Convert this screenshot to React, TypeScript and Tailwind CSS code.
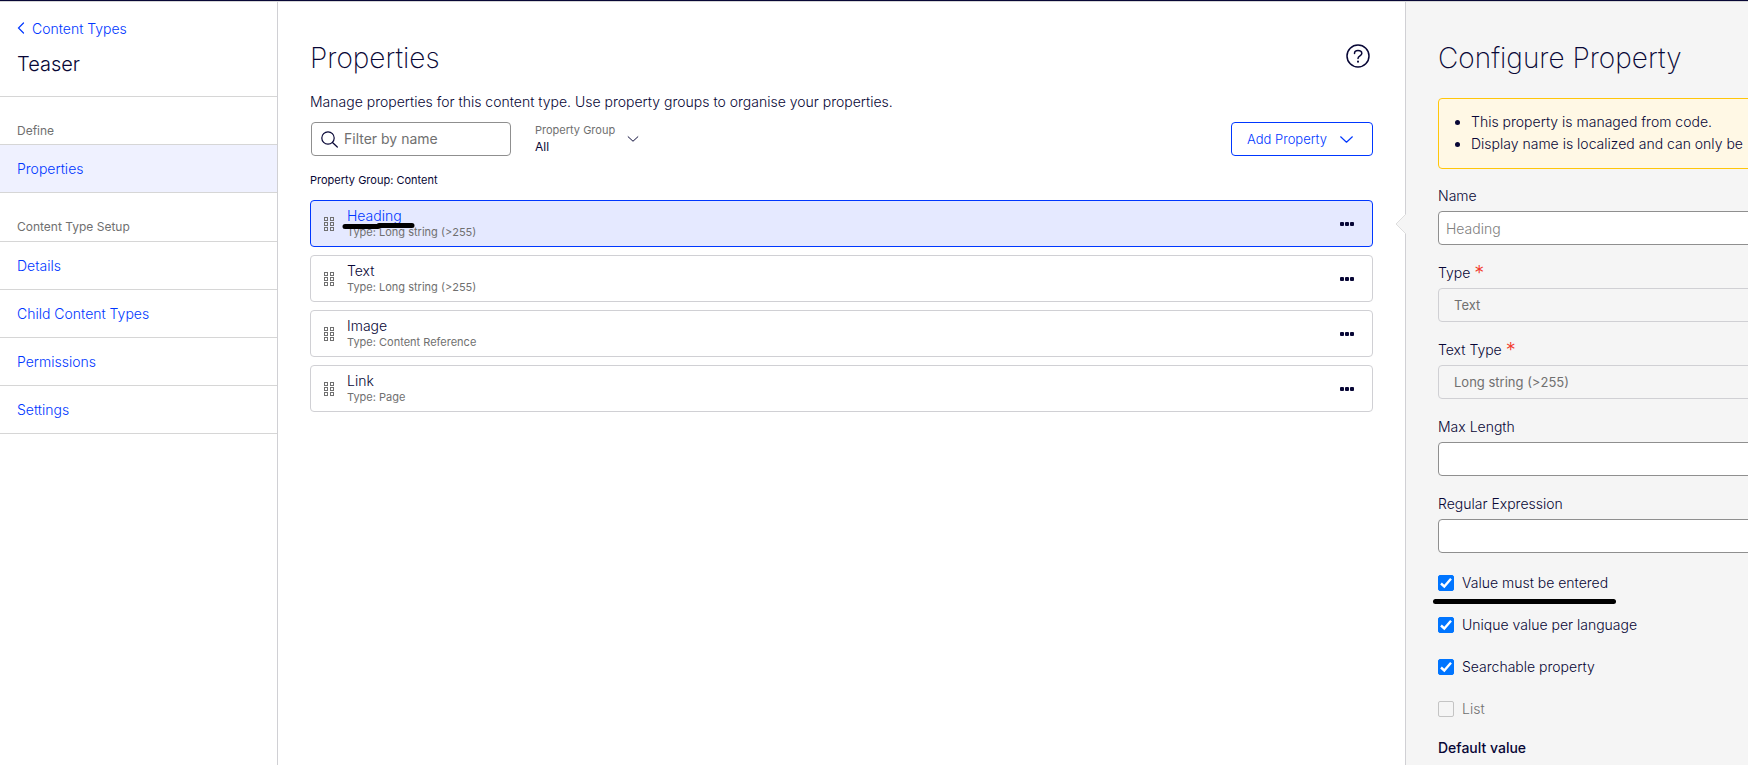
import React, { useState } from 'react';

interface Property {
  id: string;
  name: string;
  type: string;
}

const properties: Property[] = [
  { id: 'heading', name: 'Heading', type: 'Long string (>255)' },
  { id: 'text', name: 'Text', type: 'Long string (>255)' },
  { id: 'image', name: 'Image', type: 'Content Reference' },
  { id: 'link', name: 'Link', type: 'Page' }
];

const setupLinks = ['Details', 'Child Content Types', 'Permissions', 'Settings'];

const ChevronDown: React.FC<{ className: string }> = ({ className }) => (
  <svg viewBox="0 0 16 10" fill="none" stroke="currentColor" strokeWidth="1.3" strokeLinecap="round" strokeLinejoin="round" className={className}>
    <path d="M1.5 2 8 8l6.500-6" />
  </svg>
);

const GripIcon: React.FC = () => (
  <svg width="10" height="14" viewBox="0 0 10 14" fill="none" stroke="#707070" strokeWidth="1" className="mt-px">
    {[0.5, 5.5, 10.5].map(y => (
      <React.Fragment key={y}>
        <rect x="0.5" y={y} width="3" height="3" />
        <rect x="6.500" y={y} width="3" height="3" />
      </React.Fragment>
    ))}
  </svg>
);

const Sidebar: React.FC = () => (
  <nav className="w-[278px] shrink-0 border-r border-[#d0d0d4]">
    {/* Header */}
    <div className="h-[95px] border-b border-[#d6d6d6] px-[17px] pt-[17px]">
      <a href="#content-types" className="flex items-center gap-[7px] leading-5 text-[#0037ff]">
        <svg width="8" height="12" viewBox="0 0 8 12" fill="none" stroke="currentColor" strokeWidth="1.2" strokeLinecap="round" className="-mt-0.5">
          <path d="M6.500 1 1.5 6l5 5" />
        </svg>
        Content Types
      </a>
      <h1 className="mt-[11px] text-xl leading-7">Teaser</h1>
    </div>

    <h2 className="h-12 border-b border-[#d6d6d6] px-[17px] pt-[26px] text-xs leading-4 font-normal text-[#707070]">Define</h2>
    <a href="#properties" className="flex h-12 items-center border-b border-[#d6d6d6] bg-[#eff1ff] px-[17px] text-[#0037ff]">
      Properties
    </a>

    <h2 className="h-[49px] border-b border-[#d6d6d6] px-[17px] pt-[26px] text-xs leading-4 font-normal text-[#707070]">Content Type Setup</h2>
    {setupLinks.map(link => (
      <a key={link} href="#setup" className="flex h-12 items-center border-b border-[#d6d6d6] px-[17px] text-[#0037ff]">
        {link}
      </a>
    ))}
  </nav>
);

const PropertyRow: React.FC<{ property: Property; selected: boolean; onSelect: () => void }> = ({ property, selected, onSelect }) => (
  <li
    className={`relative flex h-[47px] items-center rounded border pr-[18px] pl-[13px] ${
      selected ? 'border-[#0037ff] bg-[#e5e9ff]' : 'border-[#d0d0d4] bg-white'
    }`}
  >
    <GripIcon />
    <button onClick={onSelect} className="ml-[13px] flex-1 text-left">
      <span className={`block leading-4 ${selected ? 'text-[#0037ff]' : ''}`}>{property.name}</span>
      <span className="block text-[11px] leading-4 font-normal text-[#707070]">{`Type: ${property.type}`}</span>
    </button>
    <button aria-label={`More actions for ${property.name}`}>
      <svg width="14" height="4" viewBox="0 0 14 4" fill="#080736">
        <rect width="4" height="4" rx="1" />
        <rect x="5" width="4" height="4" rx="1" />
        <rect x="10" width="4" height="4" rx="1" />
      </svg>
    </button>
    {/* Marker stroke */}
    {selected && (
      <svg width="74" height="8" viewBox="0 0 74 8" fill="none" stroke="#000" strokeWidth="5" strokeLinecap="round" className="absolute top-[20px] left-[31px]">
        <path d="M3 5.500H36M37 4.500H70" />
      </svg>
    )}
  </li>
);

const Required: React.FC = () => <span className="text-xl leading-5 text-[#f23c2e]">*</span>;

const TextField: React.FC<{ id: string; label: string; placeholder?: string }> = ({ id, label, placeholder }) => (
  <div>
    <label htmlFor={id} className="block h-[25px] leading-5">{label}</label>
    <input
      id={id}
      placeholder={placeholder}
      className="block h-[34px] w-full rounded border border-[#8f8f8f] bg-white px-[7px] placeholder:text-[#808080]"
    />
  </div>
);

const SelectField: React.FC<{ id: string; label: string; value: string }> = ({ id, label, value }) => (
  <div>
    <label htmlFor={id} className="flex h-[25px] gap-1 leading-5">
      {label}
      <Required />
    </label>
    <select
      id={id}
      disabled
      className="block h-[34px] w-full appearance-none rounded border border-[#d0d0d4] px-[15px] text-[13px] font-normal text-[#707070] opacity-100"
    >
      <option>{value}</option>
    </select>
  </div>
);

const Checkbox: React.FC<{ label: string; defaultChecked?: boolean; disabled?: boolean; marked?: boolean }> = ({
  label,
  defaultChecked,
  disabled,
  marked
}) => (
  <label className={`relative flex h-4 items-center gap-2 ${disabled ? 'text-[#707070]' : ''}`}>
    <input
      type="checkbox"
      defaultChecked={defaultChecked}
      disabled={disabled}
      className="peer size-4 appearance-none rounded-xs border border-[#c4c4c4] checked:border-[#0075ff] checked:bg-[#0075ff]"
    />
    <svg viewBox="0 0 16 16" fill="none" stroke="#fff" strokeWidth="2.400" className="pointer-events-none absolute left-0 hidden size-4 peer-checked:block">
      <path d="M3 8.500 6.300 11.500 13 3.800" />
    </svg>
    {label}
    {marked && <span className="absolute top-6 -left-[5px] h-[5px] w-[183px] rounded-full bg-black" />}
  </label>
);

const ConfigurePanel: React.FC = () => (
  <aside className="relative w-[343px] shrink-0 border-l border-[#d0d0d4] bg-[#f5f5f5]">
    {/* Pointer towards the selected row */}
    <svg width="11" height="20" viewBox="0 0 11 20" className="absolute top-[212px] -left-[11px]">
      <path d="M11 0 1 10l10 10" fill="#f5f5f5" stroke="#dedede" />
    </svg>
    <div className="h-full overflow-hidden pl-8">
      <div className="w-[420px]">
        <h2 className="pt-9 text-[28px] leading-10 font-extralight">Configure Property</h2>
        <ul className="mt-5 flex h-[71px] list-disc flex-col rounded border border-[#ffc60a] bg-[#fff8e5] pt-3 pl-8 leading-[22px]">
          <li>This property is managed from code.</li>
          <li>Display name is localized and can only be</li>
        </ul>

        <form className="mt-[17px] flex flex-col gap-[18px]">
          <TextField id="name" label="Name" placeholder="Heading" />
          <SelectField id="type" label="Type" value="Text" />
          <SelectField id="text-type" label="Text Type" value="Long string (>255)" />
          <TextField id="max-length" label="Max Length" />
          <TextField id="regex" label="Regular Expression" />

          <div className="mt-1 flex flex-col gap-[26px]">
            <Checkbox label="Value must be entered" defaultChecked marked />
            <Checkbox label="Unique value per language" defaultChecked />
            <Checkbox label="Searchable property" defaultChecked />
            <Checkbox label="List" disabled />
          </div>
          <h3 className="mt-[3px] leading-5 font-medium">Default value</h3>
        </form>
      </div>
    </div>
  </aside>
);

export default function App() {
  const [selectedId, setSelectedId] = useState<string>('heading');

  return (
    <div className="flex h-screen flex-col overflow-hidden bg-white font-['Inter',sans-serif] text-sm font-light text-[#080736]">
      <div className="h-0.5 shrink-0 border-b border-[#d6d6d6] bg-[#080736]" />
      <div className="flex min-h-0 flex-1">
        <Sidebar />

        <main className="min-w-0 flex-1 px-8">
          {/* Title */}
          <div className="flex items-start justify-between pt-9">
            <h2 className="text-[28px] leading-10 font-extralight">Properties</h2>
            <button aria-label="Help" className="mt-1.5 mr-[3px]">
              <svg width="24" height="24" viewBox="0 0 24 24" fill="none" stroke="currentColor" strokeWidth="1.5" strokeLinecap="round">
                <circle cx="12" cy="12" r="11" />
                <path d="M8.500 9.500C8.500 7.500 10 6.500 12 6.500s3.800 1 3.800 3c0 2.500-3.800 2.300-3.800 5" />
                <path d="M12 17.500v.2" strokeWidth="2" />
              </svg>
            </button>
          </div>
          <p className="mt-[14px] leading-5">Manage properties for this content type. Use property groups to organise your properties.</p>

          {/* Filters */}
          <div className="mt-[10px] flex items-center">
            <label className="ml-px flex h-[34px] w-[200px] items-center gap-[6px] rounded border border-[#8f8f8f] px-[9px]">
              <svg width="17" height="17" viewBox="0 0 17 17" fill="none" stroke="currentColor" strokeWidth="1.2" strokeLinecap="round" className="shrink-0">
                <circle cx="7" cy="7" r="6.200" />
                <path d="m11.500 11.500 4.800 4.500" />
              </svg>
              <input aria-label="Filter by name" placeholder="Filter by name" className="w-full min-w-0 font-normal outline-none placeholder:text-[#707070]" />
            </label>
            <button className="ml-6 flex items-center gap-3 text-left">
              <span>
                <span className="block text-[11px] leading-4 font-normal text-[#707070]">Property Group</span>
                <span className="block text-xs leading-[18px] font-normal">All</span>
              </span>
              <ChevronDown className="h-2 w-3" />
            </button>
            <button className="ml-auto flex h-[34px] items-center gap-3 rounded border border-[#0037ff] pr-[18px] pl-[15px] text-[13px] text-[#0037ff]">
              Add Property
              <ChevronDown className="h-[9px] w-[15px]" />
            </button>
          </div>

          <h3 className="mt-4 text-[11px] leading-4 font-normal">Property Group: Content</h3>
          <ul className="mt-3 flex flex-col gap-2">
            {properties.map(property => (
              <PropertyRow
                key={property.id}
                property={property}
                selected={property.id === selectedId}
                onSelect={() => setSelectedId(property.id)}
              />
            ))}
          </ul>
        </main>

        <ConfigurePanel />
      </div>
    </div>
  );
}
